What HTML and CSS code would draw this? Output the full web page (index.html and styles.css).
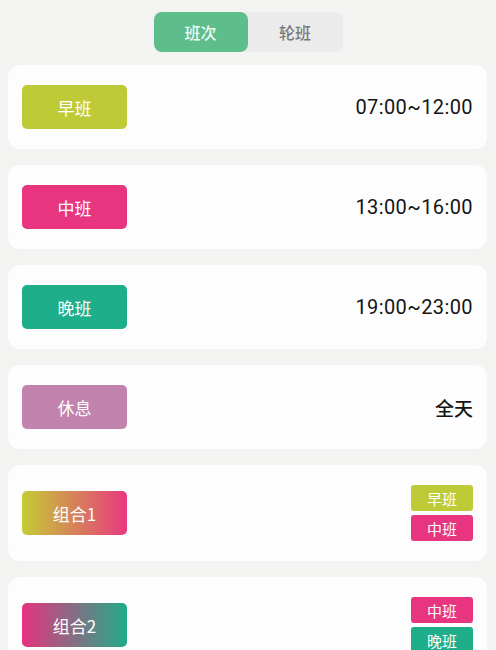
FILE: index.html
```html
<!DOCTYPE html>
<html lang="zh">
<head>
<meta charset="utf-8">
<link rel="stylesheet" href="styles.css">
</head>
<body>
<div class="page">
  <div class="toggle-wrap">
    <div class="toggle">
      <div class="seg active">班次</div>
      <div class="seg">轮班</div>
    </div>
  </div>
  <div class="list">
    <div class="card">
      <div class="tag morning">早班</div>
      <div class="time">07:00~12:00</div>
    </div>
    <div class="card">
      <div class="tag middle">中班</div>
      <div class="time">13:00~16:00</div>
    </div>
    <div class="card">
      <div class="tag night">晚班</div>
      <div class="time">19:00~23:00</div>
    </div>
    <div class="card">
      <div class="tag rest">休息</div>
      <div class="time cjk">全天</div>
    </div>
    <div class="card tall">
      <div class="tag combo1">组合1</div>
      <div class="mini-list">
        <div class="mini morning">早班</div>
        <div class="mini middle">中班</div>
      </div>
    </div>
    <div class="card tall">
      <div class="tag combo2">组合2</div>
      <div class="mini-list">
        <div class="mini middle">中班</div>
        <div class="mini night">晚班</div>
      </div>
    </div>
  </div>
</div>
</body>
</html>
```
FILE: styles.css
```css
html, body {
  margin: 0;
  padding: 0;
  background: #f3f3f2;
  font-family: "Noto Sans CJK SC", "Noto Sans", sans-serif;
}
.page {
  padding: 12px 9px 0 8px;
}
.toggle-wrap {
  display: flex;
  justify-content: center;
  padding-left: 1px;
}
.toggle {
  display: flex;
  width: 189px;
  height: 40px;
  background: #ebebeb;
  border-radius: 8px;
}
.seg {
  flex: 1;
  display: flex;
  align-items: center;
  justify-content: center;
  font-size: 16px;
  font-weight: 500;
  color: #7a7a7a;
  border-radius: 8px;
}
.seg.active {
  flex: 0 0 94px;
  background: #5dbd8b;
  color: #eef8f2;
}
.list {
  margin-top: 13px;
  display: flex;
  flex-direction: column;
  gap: 16px;
}
.card {
  height: 84px;
  background: #fdfdfd;
  border-radius: 12px;
  display: flex;
  align-items: center;
  justify-content: space-between;
  padding: 0 14px 0 14px;
}
.card.tall {
  height: 96px;
}
.tag {
  width: 105px;
  height: 44px;
  border-radius: 5px;
  display: flex;
  align-items: center;
  justify-content: center;
  color: #fff;
  font-size: 17px;
}
.time {
  font-family: Roboto, "Noto Sans CJK SC", sans-serif;
  font-size: 20px;
  letter-spacing: 0.4px;
  color: #141414;
}
.time.cjk {
  font-family: "Noto Sans CJK SC", sans-serif;
  font-size: 19px;
  font-weight: 500;
  letter-spacing: 0;
}
.mini-list {
  display: flex;
  flex-direction: column;
  gap: 4px;
}
.mini {
  width: 62px;
  height: 26px;
  border-radius: 3px;
  display: flex;
  align-items: center;
  justify-content: center;
  color: #fff;
  font-size: 15px;
}
.morning { background: #bfcb36; }
.middle { background: #e8357f; }
.night { background: #1eae89; }
.rest { background: #c283ae; }
.combo1 { background: linear-gradient(to right, #c4cc35, #e8397e); }
.combo2 { background: linear-gradient(to right, #e6337f, #1fac88); }
```
